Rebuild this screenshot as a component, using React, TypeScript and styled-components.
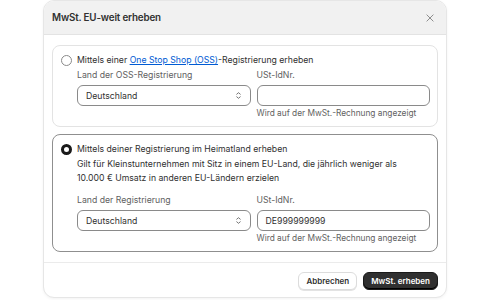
import React from "react";
import styled, { createGlobalStyle } from "styled-components";

const Global = createGlobalStyle`
  html, body { margin: 0; padding: 0; background: #ffffff; }
  body { font-family: Inter, "Noto Sans", sans-serif; color: #303030; -webkit-font-smoothing: antialiased; }
  * { box-sizing: border-box; }
`;

const Page = styled.div`
  width: 500px;
  height: 300px;
  padding-left: 43px;
  overflow: hidden;
`;

const Modal = styled.div`
  width: 404px;
  height: 298px;
  border: 1px solid #e6e6e6;
  border-radius: 11px;
  background: #fff;
  display: flex;
  flex-direction: column;
  overflow: hidden;
  box-shadow: 0 1px 3px rgba(0, 0, 0, 0.05);
`;

const Header = styled.div`
  height: 34px;
  flex: none;
  background: #f1f1f1;
  border-bottom: 1px solid #e3e3e3;
  display: flex;
  align-items: center;
  justify-content: space-between;
  padding: 0 11px 0 8px;
`;

const Title = styled.h2`
  margin: 0;
  font-size: 9.8px;
  letter-spacing: -0.15px;
  font-weight: 600;
  color: #303030;
`;

const Close = styled.button`
  border: 0;
  background: transparent;
  padding: 0;
  width: 10px;
  height: 10px;
  display: flex;
  align-items: center;
  justify-content: center;
`;

const Body = styled.div`
  height: 228px;
  flex: none;
  padding: 10px 8px 0;
  display: flex;
  flex-direction: column;
  gap: 7px;
  border-bottom: 1px solid #ebebeb;
`;

const Card = styled.div<{ $selected?: boolean }>`
  border: 1px solid ${(p) => (p.$selected ? "#8f8f8f" : "#e3e3e3")};
  border-radius: 8px;
  padding: 7px 7px 6px 8px;
  display: grid;
  grid-template-columns: 11px 1fr;
  column-gap: 5px;
`;

const Radio = styled.span<{ $checked?: boolean }>`
  width: 11px;
  height: 11px;
  margin-top: 1.5px;
  border-radius: 50%;
  border: ${(p) => (p.$checked ? "3.5px solid #1a1a1a" : "1px solid #8a8a8a")};
  background: #fff;
`;

const Content = styled.div`
  display: flex;
  flex-direction: column;
`;

const OptionTitle = styled.div`
  font-size: 8.7px;
  line-height: 14px;
  color: #303030;
`;

const Link = styled.a`
  color: #005bd3;
  text-decoration: underline;
`;

const Description = styled.div`
  max-width: 322px;
  font-size: 8.7px;
  line-height: 14px;
  color: #303030;
  margin-top: 1px;
`;

const Fields = styled.div<{ $gapTop: number }>`
  display: grid;
  grid-template-columns: 1fr 1fr;
  column-gap: 6px;
  margin-top: ${(p) => p.$gapTop}px;
`;

const Field = styled.div`
  display: flex;
  flex-direction: column;
`;

const Label = styled.label`
  font-size: 8.7px;
  line-height: 14px;
  color: #616161;
  margin-bottom: 3px;
`;

const Control = styled.div`
  height: 21px;
  border: 1px solid #8a8a8a;
  border-radius: 6px;
  background: #fff;
  display: flex;
  align-items: center;
  justify-content: space-between;
  padding: 0 8px 0 8px;
  font-size: 8.7px;
  color: #303030;
`;

const Help = styled.div`
  font-size: 8.3px;
  line-height: 14px;
  color: #616161;
`;

const Footer = styled.div`
  flex: 1;
  display: flex;
  align-items: center;
  justify-content: flex-end;
  gap: 6px;
  padding: 1px 8px 0;
`;

const Button = styled.button<{ $primary?: boolean }>`
  height: 18px;
  border-radius: 6px;
  padding: 0 7px;
  font-family: Inter, sans-serif;
  font-size: 8px;
  font-weight: 600;
  cursor: pointer;
  color: ${(p) => (p.$primary ? "#fff" : "#303030")};
  background: ${(p) => (p.$primary ? "#303030" : "#fff")};
  border: 1px solid ${(p) => (p.$primary ? "#1a1a1a" : "#dcdcdc")};
  box-shadow: ${(p) => (p.$primary ? "inset 0 -1px 0 #000" : "0 1px 0 #e3e3e3")};
`;

const Chevron = () => (
  <svg width="7" height="9" viewBox="0 0 8 10" fill="none" stroke="#616161" strokeWidth="1" strokeLinecap="round" strokeLinejoin="round">
    <path d="M2 3.5 L4 1.8 L6 3.5" />
    <path d="M2 6.5 L4 8.2 L6 6.5" />
  </svg>
);

const XIcon = () => (
  <svg width="8" height="8" viewBox="0 0 9 9" stroke="#8a8a8a" strokeWidth="1.1" strokeLinecap="round">
    <path d="M1 1 L8 8 M8 1 L1 8" />
  </svg>
);

export default function App() {
  return (
    <>
      <Global />
      <Page>
        <Modal>
          <Header>
            <Title>MwSt. EU-weit erheben</Title>
            <Close aria-label="Schließen"><XIcon /></Close>
          </Header>
          <Body>
            <Card>
              <Radio />
              <Content>
                <OptionTitle>
                  Mittels einer <Link href="#">One Stop Shop (OSS)</Link>-Registrierung erheben
                </OptionTitle>
                <Fields $gapTop={1}>
                  <Field>
                    <Label>Land der OSS-Registrierung</Label>
                    <Control>Deutschland<Chevron /></Control>
                  </Field>
                  <Field>
                    <Label>USt-IdNr.</Label>
                    <Control />
                    <Help>Wird auf der MwSt.-Rechnung angezeigt</Help>
                  </Field>
                </Fields>
              </Content>
            </Card>
            <Card $selected>
              <Radio $checked />
              <Content>
                <OptionTitle>Mittels deiner Registrierung im Heimatland erheben</OptionTitle>
                <Description>
                  Gilt für Kleinstunternehmen mit Sitz in einem EU-Land, die jährlich weniger als 10.000 € Umsatz in anderen EU-Ländern erzielen
                </Description>
                <Fields $gapTop={8}>
                  <Field>
                    <Label>Land der Registrierung</Label>
                    <Control>Deutschland<Chevron /></Control>
                  </Field>
                  <Field>
                    <Label>USt-IdNr.</Label>
                    <Control>DE999999999</Control>
                    <Help>Wird auf der MwSt.-Rechnung angezeigt</Help>
                  </Field>
                </Fields>
              </Content>
            </Card>
          </Body>
          <Footer>
            <Button>Abbrechen</Button>
            <Button $primary>MwSt. erheben</Button>
          </Footer>
        </Modal>
      </Page>
    </>
  );
}
